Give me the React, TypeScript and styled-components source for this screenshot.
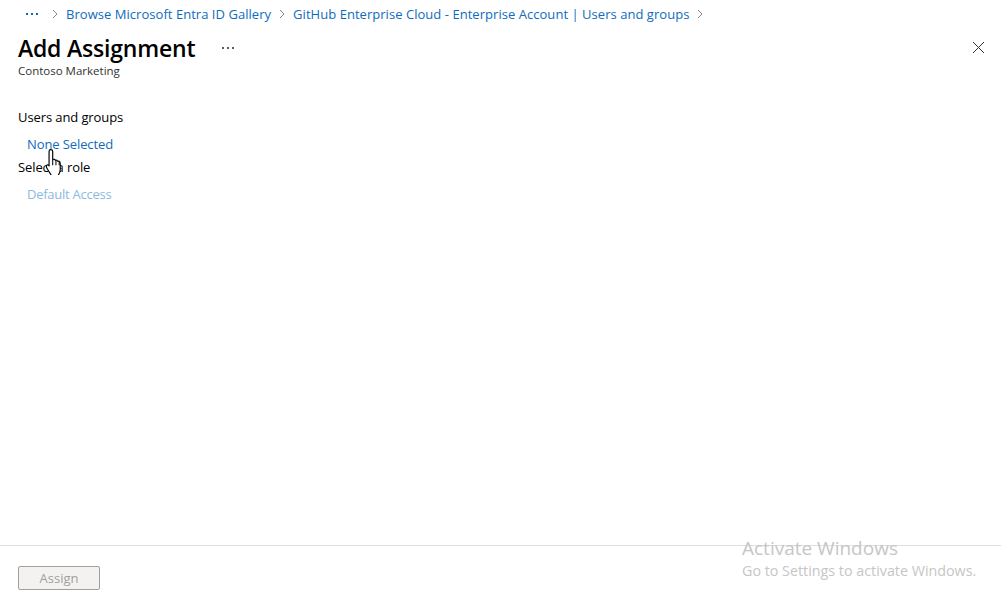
import React from "react";
import styled, { createGlobalStyle } from "styled-components";

const Global = createGlobalStyle`
  html, body { margin: 0; padding: 0; background: #fff; }
  body { font-family: "Segoe UI", "Open Sans", "Noto Sans", sans-serif; color: #000; }
  #root { height: 610px; }
`;

const Page = styled.div`
  position: relative;
  width: 1001px;
  height: 610px;
  display: flex;
  flex-direction: column;
  overflow: hidden;
`;

const Breadcrumb = styled.nav`
  display: flex;
  align-items: center;
  height: 28px;
  padding-left: 25px;
  font-size: 13px;
  color: #0f6cbd;
  white-space: nowrap;
`;

const Dots = styled.span<{ $color: string; $after?: number }>`
  display: inline-flex;
  gap: 3px;
  align-items: center;
  padding: 0 1px;
  margin-right: ${(p) => p.$after ?? 0}px;
  & > i {
    width: 2px;
    height: 2px;
    background: ${(p) => p.$color};
  }
`;

const Chevron = styled.span`
  display: inline-flex;
  width: 22px;
  justify-content: center;
  color: #8a8886;
`;

const Crumb = styled.span`
  color: #0f6cbd;
  letter-spacing: 0.04px;
`;

const Header = styled.header`
  display: flex;
  align-items: flex-start;
  padding: 5px 15px 0 18px;
`;

const TitleBlock = styled.div`
  display: flex;
  flex-direction: column;
`;

const TitleRow = styled.div`
  display: flex;
  align-items: center;
  gap: 26px;
`;

const Title = styled.h1`
  margin: 0;
  font-size: 23px;
  font-weight: 600;
  line-height: 30px;
  letter-spacing: -0.2px;
`;

const Subtitle = styled.div`
  font-size: 11.5px;
  color: #323130;
  line-height: 16px;
`;

const Spacer = styled.div`
  flex: 1;
`;

const CloseButton = styled.button`
  border: none;
  background: none;
  padding: 0;
  margin-top: 6px;
  width: 16px;
  height: 16px;
  display: flex;
  align-items: center;
  justify-content: center;
`;

const Body = styled.main`
  flex: 1;
  display: flex;
  flex-direction: column;
  padding: 29px 18px 0 18px;
  font-size: 13px;
`;

const FieldLabel = styled.div`
  line-height: 18px;
  color: #000;
  letter-spacing: -0.1px;
`;

const FieldLink = styled.div<{ $disabled?: boolean }>`
  position: relative;
  padding-left: 9px;
  line-height: 18px;
  color: ${(p) => (p.$disabled ? "#8dbadf" : "#0f6cbd")};
  letter-spacing: ${(p) => (p.$disabled ? "-0.25px" : "-0.1px")};
`;

const Footer = styled.footer`
  border-top: 1px solid #e1dfdd;
  height: 65px;
  padding: 20px 18px 0;
  box-sizing: border-box;
`;

const AssignButton = styled.button`
  width: 82px;
  height: 24px;
  border: 1px solid #a19f9d;
  border-radius: 2px;
  background: #f3f2f1;
  color: #a19f9d;
  font-family: inherit;
  font-size: 13px;
  padding: 0;
`;

const Watermark = styled.div`
  position: absolute;
  left: 742px;
  top: 536px;
  color: #c6c6c6;
  pointer-events: none;
  white-space: nowrap;
`;

const WatermarkTitle = styled.div`
  font-size: 19px;
  line-height: 25px;
`;

const WatermarkText = styled.div`
  font-size: 14.3px;
  line-height: 20px;
`;

const Cursor = styled.svg`
  position: absolute;
  left: 27px;
  top: 14px;
`;

export default function App() {
  const chevron = (
    <Chevron>
      <svg width="8" height="10" viewBox="0 0 8 10"><path d="M2 1l4 4-4 4" fill="none" stroke="#8a8886" strokeWidth="1" /></svg>
    </Chevron>
  );
  return (
    <Page>
      <Global />
      <Breadcrumb>
        <Dots $color="#0f6cbd" $after={5}><i /><i /><i /></Dots>
        {chevron}
        <Crumb>Browse Microsoft Entra ID Gallery</Crumb>
        {chevron}
        <Crumb>GitHub Enterprise Cloud - Enterprise Account | Users and groups</Crumb>
        {chevron}
      </Breadcrumb>
      <Header>
        <TitleBlock>
          <TitleRow>
            <Title>Add Assignment</Title>
            <Dots $color="#605e5c"><i /><i /><i /></Dots>
          </TitleRow>
          <Subtitle>Contoso Marketing</Subtitle>
        </TitleBlock>
        <Spacer />
        <CloseButton aria-label="Close">
          <svg width="13" height="13" viewBox="0 0 13 13">
            <path d="M1 1l11 11M12 1L1 12" stroke="#323130" strokeWidth="1" fill="none" />
          </svg>
        </CloseButton>
      </Header>
      <Body>
        <FieldLabel>Users and groups</FieldLabel>
        <FieldLink style={{ marginTop: 9 }}>
          None Selected
          <Cursor width="18" height="26" viewBox="1 1 13 20">
            <path
              d="M5 1.5c.8 0 1.5.6 1.5 1.4v6.2l.2-.1c.8-.3 1.6 0 1.8.7.7-.3 1.5 0 1.8.7.7-.3 1.6.1 1.8.9l.2 1.2v4.2c0 1.6-.5 3-1.4 4.2v1.6H5.2v-1.6l-2.7-4.3c-.4-.7-.9-1.6-.9-2.4 0-.8.9-1.2 1.6-.7l.5.4V2.9c0-.8.5-1.4 1.3-1.4z"
              fill="#fff"
              stroke="#000"
              strokeWidth="0.9"
              strokeLinejoin="round"
            />
            <path d="M6.5 9.5v4M9 10v3.5M11.5 10.5v3" stroke="#000" strokeWidth="0.8" />
          </Cursor>
        </FieldLink>
        <FieldLabel style={{ marginTop: 5 }}>Select a role</FieldLabel>
        <FieldLink $disabled style={{ marginTop: 9 }}>Default Access</FieldLink>
      </Body>
      <Footer>
        <AssignButton disabled>Assign</AssignButton>
      </Footer>
      <Watermark>
        <WatermarkTitle>Activate Windows</WatermarkTitle>
        <WatermarkText>Go to Settings to activate Windows.</WatermarkText>
      </Watermark>
    </Page>
  );
}
